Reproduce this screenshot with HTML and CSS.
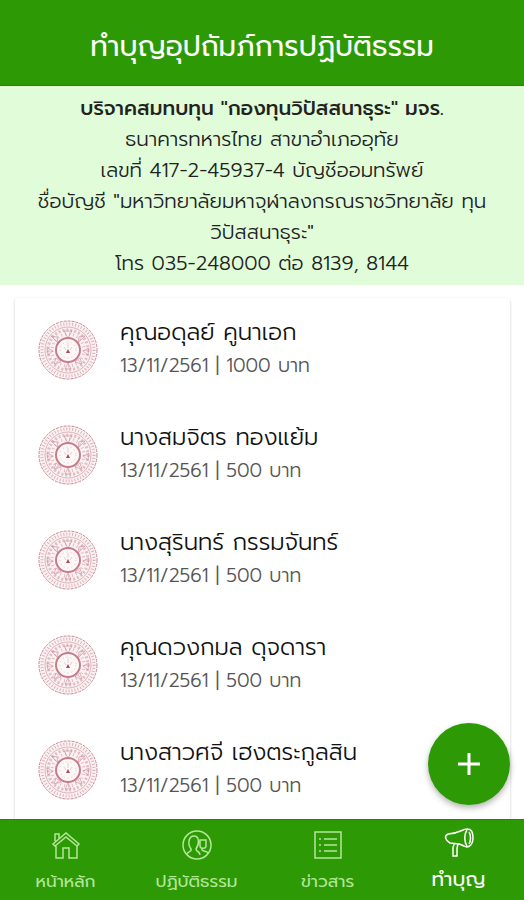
FILE: index.html
```html
<!DOCTYPE html>
<html lang="th">
<head>
    <meta charset="UTF-8">
    <meta name="viewport" content="width=device-width, initial-scale=1.0">
    <title>ทำบุญอุปถัมภ์การปฏิบัติธรรม</title>
    <link rel="stylesheet" href="styles.css">
</head>
<body>
    <!-- Seal shared by every donor row -->
    <svg class="defs" aria-hidden="true">
        <symbol id="seal" viewBox="0 0 60 60">
            <g fill="none" stroke="#c48c95">
                <circle cx="30" cy="30" r="29" fill="#fbf1f2" stroke-width="1" stroke-dasharray="3 1"/>
                <circle cx="30" cy="30" r="26" stroke-width="3" stroke-dasharray="1 2" opacity=".6"/>
                <circle cx="30" cy="30" r="23" stroke-width="1" opacity=".6"/>
                <circle cx="30" cy="30" r="20" stroke-width="3" stroke-dasharray="2 2" opacity=".5"/>
                <path d="M26 11h8l-4 7zM13 16l6 1 1 6zM47 16l-6 1-1 6zM9 28l6 3-5 4zM51 28l-6 3 5 4zM16 44l2-6 5 4zM44 44l-2-6-5 4zM30 43l-3 6h6z" opacity=".6"/>
                <circle cx="30" cy="30" r="16" stroke-width="3" stroke-dasharray="1 3" opacity=".5"/>
                <circle cx="30" cy="30" r="12" fill="#fdf8f8" stroke="#c67d89" stroke-width="2"/>
                <circle cx="30" cy="30" r="8" stroke-width="1" stroke-dasharray="1 3" opacity=".5"/>
                <path d="M30 23v5M26 27l2 3M34 27l-2 3" opacity=".4"/>
            </g>
            <path d="M30 29l2 4h-4z" fill="#b04458"/>
        </symbol>
    </svg>

    <header class="header">
        <h1>ทำบุญอุปถัมภ์การปฏิบัติธรรม</h1>
    </header>

    <section class="notice">
        <strong>บริจาคสมทบทุน "กองทุนวิปัสสนาธุระ" มจร.</strong><br>
        ธนาคารทหารไทย สาขาอำเภออุทัย<br>
        เลขที่ 417-2-45937-4 บัญชีออมทรัพย์<br>
        ชื่อบัญชี "มหาวิทยาลัยมหาจุฬาลงกรณราชวิทยาลัย ทุน<br>
        วิปัสสนาธุระ"<br>
        โทร 035-248000 ต่อ 8139, 8144
    </section>

    <main class="content">
        <ul class="card">
            <li class="donor">
                <svg class="seal" aria-hidden="true"><use href="#seal"/></svg>
                <div class="info">
                    <h2>คุณอดุลย์ คูนาเอก</h2>
                    <p>13/11/2561 | 1000 บาท</p>
                </div>
            </li>
            <li class="donor">
                <svg class="seal" aria-hidden="true"><use href="#seal"/></svg>
                <div class="info">
                    <h2>นางสมจิตร ทองแย้ม</h2>
                    <p>13/11/2561 | 500 บาท</p>
                </div>
            </li>
            <li class="donor">
                <svg class="seal" aria-hidden="true"><use href="#seal"/></svg>
                <div class="info">
                    <h2>นางสุรินทร์ กรรมจันทร์</h2>
                    <p>13/11/2561 | 500 บาท</p>
                </div>
            </li>
            <li class="donor">
                <svg class="seal" aria-hidden="true"><use href="#seal"/></svg>
                <div class="info">
                    <h2>คุณดวงกมล ดุจดารา</h2>
                    <p>13/11/2561 | 500 บาท</p>
                </div>
            </li>
            <li class="donor">
                <svg class="seal" aria-hidden="true"><use href="#seal"/></svg>
                <div class="info">
                    <h2>นางสาวศจี เฮงตระกูลสิน</h2>
                    <p>13/11/2561 | 500 บาท</p>
                </div>
            </li>
        </ul>
    </main>

    <button class="fab" type="button" aria-label="เพิ่ม">
        <svg viewBox="0 0 24 24" aria-hidden="true"><path d="M12 1v22M1 12h22" fill="none" stroke="#fff" stroke-width="3"/></svg>
    </button>

    <nav class="tabs">
        <a href="#home">
            <svg viewBox="0 0 30 30" aria-hidden="true"><path d="M2 14L15 3l13 11-2 2L15 7 4 16zM4 11V4h4v4M5 16v12h7V18h6v10h8V16"/></svg>
            <span>หน้าหลัก</span>
        </a>
        <a href="#practice">
            <svg viewBox="0 0 30 30" aria-hidden="true"><circle cx="15" cy="15" r="14"/><path d="M5 24c1-3 5-2 4-5-4-6-2-13 3-13s6 7 2 13c0 3 4 2 4 6M18 10h6v6c0 3-6 3-6 0zM20 18v2c0 1 5 1 6 3"/></svg>
            <span>ปฏิบัติธรรม</span>
        </a>
        <a href="#news">
            <svg viewBox="0 0 30 30" aria-hidden="true"><path d="M2 2h26v26H2zM11 9h13M11 15h13M11 21h13M6 9h2M6 15h2M6 21h2"/></svg>
            <span>ข่าวสาร</span>
        </a>
        <a href="#donate" class="active">
            <svg viewBox="0 0 30 30" aria-hidden="true"><path d="M4 6C0 8 1 12 6 15c6 1 9 0 14 3 3 2 8 1 9-7 0-8-2-10-6-10-5 0-6 4-19 5zM23 2c-3 4-3 12 0 16M25 4c2 3 2 9 0 12M10 16l-1 4v8h4v-8l1-4"/></svg>
            <span>ทำบุญ</span>
        </a>
    </nav>
</body>
</html>
```
FILE: styles.css
```css
* {
    box-sizing: border-box;
}

body {
    display: flex;
    flex-direction: column;
    height: 100vh;
    margin: 0;
    font-family: Prompt, Kanit, "Noto Sans Thai", "Noto Sans", sans-serif;
    font-weight: 300;
    background-color: #fff;
    color: #222;
}

h1, h2, p, ul {
    margin: 0;
    padding: 0;
    font-weight: 300;
}

.defs {
    display: none;
}

.header {
    flex: none;
    padding: 27px 16px 18px;
    background-color: #2d9a05;
    border-bottom: 1px solid #25860a;
    color: #fff;
    text-align: center;
}

.header h1 {
    font-size: 28px;
    font-weight: 400;
    line-height: 40px;
}

.notice {
    flex: none;
    padding: 7px 8px 6px;
    background-color: #e1fcd8;
    font-size: 20px;
    line-height: 31px;
    text-align: center;
    white-space: nowrap;
}

.notice strong {
    font-weight: 500;
}

.content {
    flex: 1;
    min-height: 0;
    padding: 13px 14px 0 15px;
    overflow-y: auto;
    scrollbar-width: none;
}

.card {
    list-style: none;
    border-radius: 4px;
    box-shadow: 0 1px 3px rgba(0, 0, 0, 0.2);
}

.donor {
    display: flex;
    align-items: center;
    gap: 22px;
    height: 105px;
    padding: 0 23px 2px;
}

.seal {
    flex: none;
    width: 60px;
    height: 60px;
}

.info {
    padding-bottom: 2px;
}

.donor h2 {
    font-size: 23px;
    line-height: 34px;
    color: #111;
}

.donor p {
    font-size: 19px;
    line-height: 32px;
    color: #555;
}

.fab {
    position: fixed;
    right: 14px;
    bottom: 95px;
    display: flex;
    align-items: center;
    justify-content: center;
    width: 82px;
    height: 82px;
    padding: 0;
    border: none;
    border-radius: 50%;
    background-color: #2d9a05;
    box-shadow: 0 3px 6px rgba(0, 0, 0, 0.3);
    cursor: pointer;
}

.fab svg {
    width: 24px;
    height: 24px;
}

.tabs {
    display: grid;
    grid-template-columns: repeat(4, 1fr);
    flex: none;
    height: 81px;
    background-color: #2d9a05;
    border-top: 1px solid #25860a;
}

.tabs a {
    display: flex;
    flex-direction: column;
    align-items: center;
    gap: 8px;
    padding-top: 10px;
    color: #b4e69c;
    font-size: 17px;
    font-weight: 400;
    line-height: 26px;
    text-decoration: none;
}

.tabs svg {
    width: 30px;
    height: 30px;
    fill: none;
    stroke: currentColor;
    stroke-width: 1.5;
}

.tabs .active {
    padding-top: 8px;
    color: #fff;
    font-size: 20px;
}
```
